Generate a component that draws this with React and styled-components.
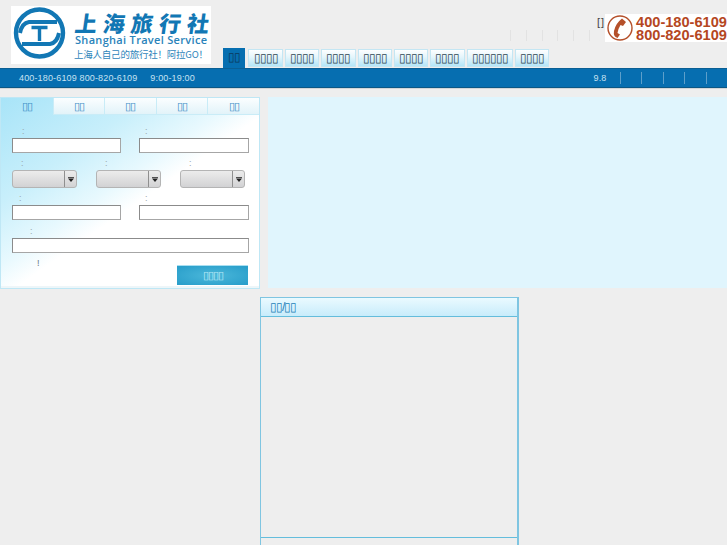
import styled, { createGlobalStyle } from "styled-components";

const Global = createGlobalStyle`
  html, body { margin: 0; padding: 0; height: 545px; overflow: hidden; background: #eee; }
  body { font-family: "Liberation Sans", Arial, sans-serif; font-size: 12px; }
  * { box-sizing: border-box; }
`

const Header = styled.header`
  display: flex;
  height: 68px;
  padding-left: 11px;
`
const Logo = styled.div`
  width: 200px;
  height: 58px;
  margin-top: 6px;
  background: #fff;
  flex: none;
  svg { display: block; }
`
const HeaderRight = styled.div`
  flex: 1;
  margin-left: 12px;
  display: flex;
  flex-direction: column;
  min-width: 0;
`
const TopRow = styled.div`
  height: 48px;
  display: flex;
  justify-content: flex-end;
`
const Utility = styled.div`
  width: 95px;
  padding-top: 16px;
`
const Bracket = styled.div`
  text-align: right;
  font-size: 11px;
  line-height: 12px;
  letter-spacing: 1px;
  color: #444;
`
const Seps = styled.div`
  display: flex;
  margin-top: 2px;
`
const Sep = styled.i`
  width: 18.7px;
  height: 11px;
  border-left: 1px solid #e2e2e2;
`
const Phone = styled.div`
  width: 122px;
  height: 28px;
  margin-top: 14px;
  background: #fff;
  svg { display: block; }
`
const Nav = styled.nav`
  display: flex;
  align-items: flex-end;
  gap: 2px;
  height: 20px;
`
const NavItem = styled.a`
  height: ${(p) => (p.$active ? "20px" : "18px")};
  margin: ${(p) => (p.$active ? "0 1px 0 0" : "0 0 1px")};
  padding: 0 4.2px;
  font-size: 12px;
  line-height: 16px;
  letter-spacing: -1px;
  white-space: nowrap;
  color: ${(p) => (p.$active ? "#0b3a5c" : "#2f4652")};
  background: ${(p) => (p.$active ? "#066eb0" : "linear-gradient(#fdfeff, #e4f5fb 45%, #b4e6f8)")};
  border: 1px solid ${(p) => (p.$active ? "#066eb0" : "#c4e6f3")};
  border-bottom: ${(p) => (p.$active ? "none" : undefined)};
`
const Bar = styled.div`
  height: 20px;
  display: flex;
  align-items: center;
  padding-left: 19px;
  background: #066eb0;
  border-top: 1px solid #0a5f94;
  border-bottom: 1px solid #0b5785;
  box-shadow: 0 1px 0 #d2d6d8;
  color: #c6e2f2;
  font-size: 9px;
  letter-spacing: 0.15px;
`
const BarHours = styled.span`
  margin-left: 13px;
`
const BarRight = styled.div`
  margin-left: auto;
  display: flex;
  align-items: center;
`
const BarSep = styled.i`
  width: 21.5px;
  height: 12px;
  border-left: 1px solid #5d9fca;
`
const Version = styled.span`
  margin-right: 13px;
`
const Main = styled.main`
  display: flex;
  margin-top: 9px;
  gap: 8px;
`
const Panel = styled.section`
  width: 260px;
  height: 192px;
  flex: none;
  border: 1px solid #bfe7f5;
  background: linear-gradient(145deg, #a8e4f8 0%, #c8effb 28%, #e8f9fe 45%, #fff 54%);
  box-shadow: inset 0 -2px 0 #eef6f9;
  display: flex;
  flex-direction: column;
`
const Tabs = styled.div`
  display: grid;
  grid-template-columns: repeat(5, 1fr);
  height: 16px;
  flex: none;
`
const Tab = styled.div`
  text-align: center;
  font-size: 11px;
  line-height: 16px;
  letter-spacing: -1px;
  color: #3b8fc6;
  background: ${(p) => (p.$active ? "transparent" : "linear-gradient(#fbfeff, #e2f3f9)")};
  border-left: ${(p) => (p.$active ? "none" : "1px solid #c9ecf7")};
  border-bottom: ${(p) => (p.$active ? "none" : "1px solid #c9ecf7")};
`
const Form = styled.form`
  flex: 1;
  padding: 7px 10px 0 11px;
  min-height: 0;
`
const Pair = styled.div`
  display: grid;
  grid-template-columns: 109px 110px;
  gap: 0 18px;
`
const Triple = styled.div`
  display: grid;
  grid-template-columns: repeat(3, 65px);
  gap: 0 19px;
`
const Cell = styled.div`
  min-width: 0;
`
const Label = styled.label`
  display: flex;
  align-items: flex-end;
  height: ${(p) => p.$height || 17}px;
  padding: 0 0 2px ${(p) => p.$indent}px;
  font-size: 9px;
  line-height: 10px;
  color: #99a5aa;
`
const Input = styled.input`
  display: block;
  width: 100%;
  height: 15px;
  padding: 0 2px;
  background: #fff;
  border: 1px solid;
  border-color: #8b8b8b #a6a6a6 #a6a6a6 #8b8b8b;
  outline: none;
`
const SelectBox = styled.div`
  height: 18px;
  display: flex;
  border: 1px solid #b4b4b4;
  border-radius: 3px;
  background: linear-gradient(#ececec, #d2d2d4);
`
const SelectValue = styled.div`
  flex: 1;
`
const SelectArrow = styled.div`
  width: 12px;
  border-left: 1px solid #8f8f8f;
  display: flex;
  align-items: center;
  justify-content: center;
  svg { display: block; }
`
const FormFoot = styled.div`
  display: flex;
  justify-content: space-between;
  align-items: flex-start;
  margin-top: 12px;
  padding-left: 25px;
  padding-right: 1px;
`
const Note = styled.span`
  margin-top: -7px;
  font-size: 9px;
  line-height: 10px;
  color: #66777f;
`
const Submit = styled.button`
  width: 71px;
  height: 20px;
  padding: 0;
  border: none;
  border-top: 1px solid #a9dff1;
  font-family: inherit;
  font-size: 11px;
  letter-spacing: -1px;
  color: #b9e8f6;
  background: radial-gradient(ellipse at center, #4cb8da 0%, #2a9fcb 90%);
`
const Hero = styled.div`
  flex: 1;
  height: 191px;
  background: #e0f5fd;
`
const Box = styled.section`
  width: 259px;
  height: 248px;
  margin: 8px 0 0 260px;
  border: 1px solid #7fc5e1;
  border-width: 1px 2px 0 1px;
`
const BoxTitle = styled.h3`
  height: 19px;
  margin: 0;
  padding-left: 9px;
  font-size: 12px;
  font-weight: normal;
  line-height: 19px;
  letter-spacing: -1px;
  color: #1d7fb8;
  background: linear-gradient(#eafaff, #c8ecfb);
  border-bottom: 1px solid #64bddc;
`
const BoxBody = styled.div`
  height: 221px;
  border-bottom: 1px solid #64bddc;
`

const navItems = [2, 4, 4, 4, 4, 4, 4, 6, 4]
const tofu = (n) => "▯".repeat(n)

function LogoArt() {
  return (
    <svg width="200" height="58" viewBox="0 0 200 58">
      <g fill="none" stroke="#1277b4">
        <circle cx="28.5" cy="27" r="23.5" strokeWidth="4.4" />
        <path d="M46 16 H18 Q11 17 9 27" strokeWidth="4" />
        <path d="M11 38 H39 Q46 37 48 27" strokeWidth="4" />
        <path d="M20.5 21.5 H36.5 M28.5 21.5 V35" strokeWidth="3.4" />
      </g>
      <g transform="translate(63 26) skewX(-8)">
        <text x="0" y="0" fontFamily="'Noto Sans CJK SC', sans-serif" fontWeight="900" fontSize="22" fill="#1277b4" textLength="134" lengthAdjust="spacing">上海旅行社</text>
      </g>
      <text x="64" y="38" fontFamily="'Open Sans', sans-serif" fontWeight="600" fontSize="11" fill="#2a83ba" textLength="132">Shanghai Travel Service</text>
      <text x="63" y="52" fontFamily="'Noto Sans CJK SC', sans-serif" fontSize="9.5" fill="#2f86bb" textLength="134">上海人自己的旅行社！阿拉GO！</text>
    </svg>
  )
}

function PhoneArt() {
  return (
    <svg width="122" height="28" viewBox="0 0 122 28">
      <circle cx="15" cy="14" r="12" fill="none" stroke="#b5502a" strokeWidth="1.4" />
      <path d="M17 4.5 L21 8 L18 12 L15.5 11 Q13 15 12.5 19 L15 20.5 L12.5 24 Q8 22.5 9 17 Q10.5 9.5 17 4.5 Z" fill="#b5502a" />
      <g fontFamily="'Liberation Sans', sans-serif" fontWeight="700" fontSize="14.5" fill="#b5471f">
        <text x="31" y="13" textLength="91" lengthAdjust="spacingAndGlyphs">400-180-6109</text>
        <text x="31" y="25.5" textLength="91" lengthAdjust="spacingAndGlyphs">800-820-6109</text>
      </g>
    </svg>
  )
}

function Select() {
  return (
    <SelectBox>
      <SelectValue />
      <SelectArrow>
        <svg width="6" height="5" viewBox="0 0 6 5"><path d="M0 0H6V0.8H0ZM0 1.5H6L3 5Z" fill="#222" /></svg>
      </SelectArrow>
    </SelectBox>
  )
}

export default function App() {
  return (
    <>
      <Global />
      <Header>
        <Logo><LogoArt /></Logo>
        <HeaderRight>
          <TopRow>
            <Utility>
              <Bracket>[]</Bracket>
              <Seps>
                {[0, 1, 2, 3, 4, 5].map((i) => <Sep key={i} />)}
              </Seps>
            </Utility>
            <Phone><PhoneArt /></Phone>
          </TopRow>
          <Nav>
            {navItems.map((n, i) => (
              <NavItem key={i} $active={i === 0}>{tofu(n)}</NavItem>
            ))}
          </Nav>
        </HeaderRight>
      </Header>
      <Bar>
        <span>400-180-6109 800-820-6109</span>
        <BarHours>9:00-19:00</BarHours>
        <BarRight>
          <Version>9.8</Version>
          {[0, 1, 2, 3, 4].map((i) => <BarSep key={i} />)}
        </BarRight>
      </Bar>
      <Main>
        <Panel>
          <Tabs>
            {[0, 1, 2, 3, 4].map((i) => <Tab key={i} $active={i === 0}>{tofu(2)}</Tab>)}
          </Tabs>
          <Form>
            <Pair>
              <Cell><Label $indent={10}>:</Label><Input /></Cell>
              <Cell><Label $indent={6}>:</Label><Input /></Cell>
            </Pair>
            <Triple>
              <Cell><Label $indent={9}>:</Label><Select /></Cell>
              <Cell><Label $indent={9}>:</Label><Select /></Cell>
              <Cell><Label $indent={9}>:</Label><Select /></Cell>
            </Triple>
            <Pair>
              <Cell><Label $indent={7}>:</Label><Input /></Cell>
              <Cell><Label $indent={6}>:</Label><Input /></Cell>
            </Pair>
            <Label $indent={18} $height={18}>:</Label>
            <Input />
            <FormFoot>
              <Note>!</Note>
              <Submit type="button">{tofu(4)}</Submit>
            </FormFoot>
          </Form>
        </Panel>
        <Hero />
      </Main>
      <Box>
        <BoxTitle>{tofu(2)}/{tofu(2)}</BoxTitle>
        <BoxBody />
      </Box>
    </>
  )
}
